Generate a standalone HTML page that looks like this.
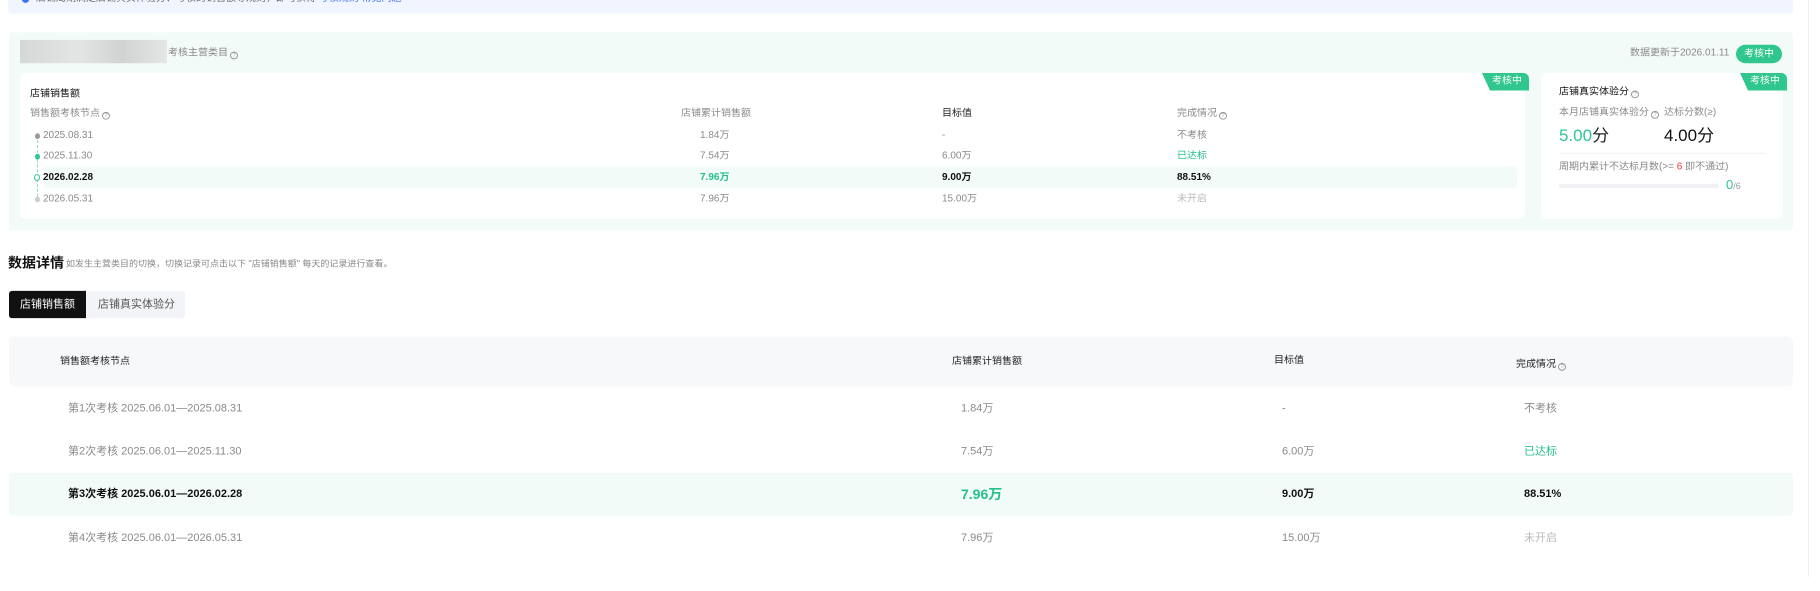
<!DOCTYPE html>
<html><head><meta charset="utf-8"><style>
*{margin:0;padding:0;box-sizing:border-box}
body{width:1820px;height:577px;overflow:hidden;background:#fff;font-family:"Liberation Sans","Noto Sans CJK SC",sans-serif;position:relative;color:#222}
#w{position:absolute;left:0;top:0;width:1820px;height:600px;transform:scale(1,0.973);transform-origin:0 0}
#b{position:absolute;left:0;top:7px;width:1820px;height:600px}
.a{position:absolute;white-space:nowrap;line-height:1}
.g{color:#8a8a8a}
.gr{color:#25c08a}
.q{display:inline-block;width:8px;height:8px;border:1px solid #999;border-radius:50%;font-size:6px;line-height:6px;text-align:center;color:#999;vertical-align:-1px;margin-left:2px}
.s10{font-size:10px}.s11{font-size:11px}
.tag{position:absolute;background:#2fc78e;color:#fff;font-size:10px;line-height:18px;height:18px;padding:0 7px 0 10px;clip-path:polygon(0 0,100% 0,100% 100%,8px 100%);border-top-right-radius:6px}
</style></head><body><div id="w">
<div class="a" style="left:8px;top:0;width:1785px;height:14px;background:#f0f5ff;border-radius:0 0 4px 4px"></div>
<div class="a" style="left:22px;top:-4px;width:7px;height:7px;border-radius:50%;background:#3b6ff5"></div>
<div class="a s10" style="left:36px;top:-6px;color:#666">店铺周期满足店铺真实体验分、考核的销售额等规则，即可获得 <span style="color:#3b6ff5">考核规则 常见问题</span></div>

<div class="a" style="left:9px;top:33px;width:1784px;height:204px;background:#f3fbf8;border-radius:4px"></div>
<div class="a" style="left:20px;top:41px;width:147px;height:24px;background:linear-gradient(90deg,#d6d8d8,#e3e5e4 40%,#d0d3d2 70%,#e5e7e6)"></div>
<div class="a s10 g" style="left:168px;top:50px">考核主营类目<span class="q">?</span></div>
<div class="a s10 g" style="left:1630px;top:50px">数据更新于2026.01.11</div>
<div class="a" style="left:1736px;top:46px;width:46px;height:19px;border-radius:10px;background:#2fc78e;color:#fff;font-size:10px;line-height:19px;text-align:center">考核中</div>

<div class="a" style="left:20px;top:75px;width:1505px;height:150px;background:#fff;border-radius:6px"></div>
<div class="tag" style="left:1482px;top:75px">考核中</div>
<div class="a s10" style="left:30px;top:92px;color:#111">店铺销售额</div>
<div class="a s10 g" style="left:30px;top:112px">销售额考核节点<span class="q">?</span></div>
<div class="a s10 g" style="left:681px;top:112px">店铺累计销售额</div>
<div class="a s10" style="left:942px;top:112px;color:#222">目标值</div>
<div class="a s10 g" style="left:1177px;top:112px">完成情况<span class="q">?</span></div>
<div class="a" style="left:44px;top:171px;width:1473px;height:22px;background:#f2fbf7;border-radius:4px"></div>
<div class="a" style="left:37px;top:144px;width:0;height:58px;border-left:1px dashed #8fdcbf"></div>
<div class="a" style="left:35px;top:137px;width:5px;height:6px;border-radius:50%;background:#999"></div>
<div class="a" style="left:35px;top:158px;width:5px;height:6px;border-radius:50%;background:#2fc78e"></div>
<div class="a" style="left:34px;top:179px;width:6px;height:7px;border-radius:50%;border:1px solid #2fc78e;background:#fff"></div>
<div class="a" style="left:35px;top:202px;width:5px;height:6px;border-radius:50%;background:#ccc"></div>
<div class="a s10 g" style="left:43px;top:135px">2025.08.31</div>
<div class="a s10 g" style="left:43px;top:156px">2025.11.30</div>
<div class="a s10" style="left:43px;top:178px;font-weight:bold;color:#111">2026.02.28</div>
<div class="a s10 g" style="left:43px;top:200px">2026.05.31</div>
<div class="a s10 g" style="left:700px;top:135px">1.84万</div>
<div class="a s10 g" style="left:700px;top:156px">7.54万</div>
<div class="a s10 gr" style="left:700px;top:178px;font-weight:bold">7.96万</div>
<div class="a s10 g" style="left:700px;top:200px">7.96万</div>
<div class="a s10 g" style="left:942px;top:135px">-</div>
<div class="a s10 g" style="left:942px;top:156px">6.00万</div>
<div class="a s10" style="left:942px;top:178px;font-weight:bold;color:#111">9.00万</div>
<div class="a s10 g" style="left:942px;top:200px">15.00万</div>
<div class="a s10 g" style="left:1177px;top:135px">不考核</div>
<div class="a s10 gr" style="left:1177px;top:156px">已达标</div>
<div class="a s10" style="left:1177px;top:178px;font-weight:bold;color:#111">88.51%</div>
<div class="a s10" style="left:1177px;top:200px;color:#bbb">未开启</div>

<div class="a" style="left:1541px;top:75px;width:242px;height:150px;background:#fff;border-radius:6px"></div>
<div class="tag" style="left:1740px;top:75px">考核中</div>
<div class="a s10" style="left:1559px;top:90px;color:#111">店铺真实体验分<span class="q">?</span></div>
<div class="a s10 g" style="left:1559px;top:111px">本月店铺真实体验分<span class="q">?</span></div>
<div class="a s10 g" style="left:1664px;top:111px">达标分数(≥)</div>
<div class="a" style="left:1559px;top:131px;font-size:17px;color:#2fc78e">5.00<span style="color:#222">分</span></div>
<div class="a" style="left:1664px;top:131px;font-size:17px;color:#111">4.00分</div>
<div class="a" style="left:1559px;top:157px;width:206px;height:1px;background:#f0f0f0"></div>
<div class="a s10 g" style="left:1559px;top:167px">周期内累计不达标月数(&gt;= <span style="color:#f33">6</span> 即不通过)</div>
<div class="a" style="left:1559px;top:189px;width:160px;height:4px;background:#f0f0f5;border-radius:2px"></div>
<div class="a" style="left:1726px;top:183px;font-size:13px;color:#2fc78e">0<span style="font-size:9px;color:#999">/6</span></div>

<div id="b">
<div class="a" style="left:8px;top:256px;font-size:14px;font-weight:bold;color:#111">数据详情</div>
<div class="a" style="left:66px;top:260px;font-size:9px;color:#888">如发生主营类目的切换，切换记录可点击以下 "店铺销售额" 每天的记录进行查看。</div>
<div class="a" style="left:9px;top:292px;width:176px;height:28px;background:#f3f4f8;border-radius:3px"></div>
<div class="a" style="left:9px;top:292px;width:77px;height:28px;background:#111;border-radius:3px 0 0 3px;color:#fff;font-size:11px;line-height:28px;text-align:center">店铺销售额</div>
<div class="a s11" style="left:98px;top:301px;color:#555">店铺真实体验分</div>

<div class="a" style="left:9px;top:339px;width:1784px;height:51px;background:#f7f8fa;border-radius:5px"></div>
<div class="a s10" style="left:60px;top:360px;color:#222">销售额考核节点</div>
<div class="a s10" style="left:952px;top:360px;color:#222">店铺累计销售额</div>
<div class="a s10" style="left:1274px;top:359px;color:#222">目标值</div>
<div class="a s10" style="left:1516px;top:363px;color:#222">完成情况<span class="q">?</span></div>
<div class="a" style="left:9px;top:479px;width:1784px;height:44px;background:#f2fbf7;border-radius:4px"></div>
<div class="a s11 g" style="left:68px;top:408px">第1次考核 2025.06.01—2025.08.31</div>
<div class="a s11 g" style="left:68px;top:452px">第2次考核 2025.06.01—2025.11.30</div>
<div class="a s11" style="left:68px;top:496px;font-weight:bold;color:#111">第3次考核 2025.06.01—2026.02.28</div>
<div class="a s11 g" style="left:68px;top:541px">第4次考核 2025.06.01—2026.05.31</div>
<div class="a s11 g" style="left:961px;top:408px">1.84万</div>
<div class="a s11 g" style="left:961px;top:452px">7.54万</div>
<div class="a gr" style="left:961px;top:494px;font-size:14px;font-weight:bold">7.96万</div>
<div class="a s11 g" style="left:961px;top:541px">7.96万</div>
<div class="a s11 g" style="left:1282px;top:408px">-</div>
<div class="a s11 g" style="left:1282px;top:452px">6.00万</div>
<div class="a s11" style="left:1282px;top:496px;font-weight:bold;color:#111">9.00万</div>
<div class="a s11 g" style="left:1282px;top:541px">15.00万</div>
<div class="a s11 g" style="left:1524px;top:408px">不考核</div>
<div class="a s11 gr" style="left:1524px;top:452px">已达标</div>
<div class="a s11" style="left:1524px;top:496px;font-weight:bold;color:#111">88.51%</div>
<div class="a s11" style="left:1524px;top:541px;color:#bbb">未开启</div>
</div>
</div>
<div class="a" style="left:1808px;top:0;width:1px;height:577px;background:#eee"></div>
</body></html>
